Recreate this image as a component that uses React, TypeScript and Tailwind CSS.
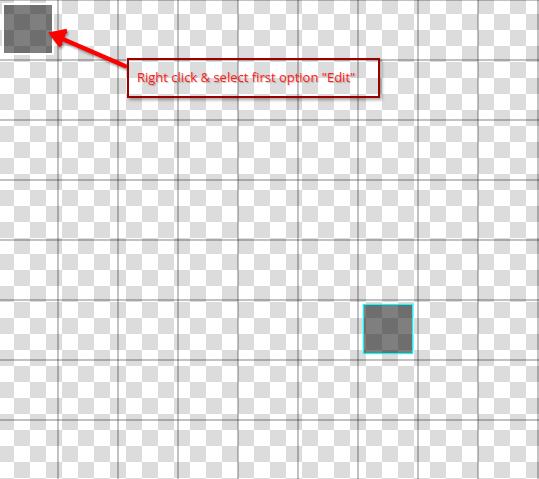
import React from "react";

export default function App() {
  return (
    <div className="relative w-[539px] h-[479px] overflow-hidden bg-white [background-image:conic-gradient(#fff_0_25%,#dcdcdc_0_50%,#fff_0_75%,#dcdcdc_0)] [background-size:32px_32px] [background-position:14px_14px]">
      {/* tile grid lines */}
      <div className="absolute inset-0 bg-[image:linear-gradient(to_right,rgba(0,0,0,0.24)_2px,transparent_2px),linear-gradient(rgba(0,0,0,0.24)_2px,transparent_2px)] bg-[length:60px_100%,100%_60px] bg-[position:57px_0,0_59px]" />

      {/* selected tile */}
      <div className="absolute left-[2px] top-[3px] w-[52px] h-[52px] border-2 border-white">
        <div className="w-full h-full bg-black/50" />
      </div>

      {/* placed tile */}
      <div className="absolute left-[363px] top-[304px] w-[50px] h-[50px] border border-[#00ffff] shadow-[0_0_1px_#00ffff]">
        <div className="w-full h-full bg-black/50" />
      </div>

      {/* arrow */}
      <svg
        className="absolute left-0 top-0 drop-shadow-[1px_2px_1px_rgba(0,0,0,0.35)]"
        width="539"
        height="479"
        viewBox="0 0 539 479"
      >
        <line x1="125" y1="66" x2="58" y2="37" stroke="#ff0000" strokeWidth="4.5" strokeLinecap="round" />
        <polyline
          points="67,31 52,34 61,46"
          fill="#ff0000"
          stroke="#ff0000"
          strokeWidth="4.5"
          strokeLinejoin="miter"
        />
      </svg>

      {/* callout */}
      <div className="absolute left-[127px] top-[58px] w-[253px] h-[40px] border-2 border-[#990000] shadow-[2px_2px_3px_rgba(0,0,0,0.35)] pl-[8px] pt-[4px]">
        <span className="font-['Open_Sans',sans-serif] text-[13px] leading-[18px] text-[#ff1a1a] [text-shadow:1px_1px_1px_rgba(0,0,0,0.25)]">
          Right click &amp; select first option "Edit"
        </span>
      </div>
    </div>
  );
}
